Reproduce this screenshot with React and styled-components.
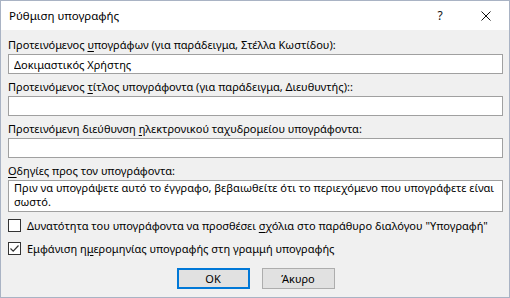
import React from 'react';
import styled, {createGlobalStyle} from 'styled-components';

const GlobalStyle = createGlobalStyle`
	html, body {
		margin: 0;
		padding: 0;
		background: #ffffff;
	}
	body {
		font-family: "Noto Sans", "Liberation Sans", sans-serif;
		font-size: 11px;
		color: #000;
	}
`;

const Window = styled.div`
	width: 510px;
	height: 298px;
	box-sizing: border-box;
	border: 1px solid #a9b3c4;
	background: #f0f0f0;
	display: flex;
	flex-direction: column;
	overflow: hidden;
`;

const TitleBar = styled.div`
	height: 29px;
	background: #ffffff;
	display: flex;
	align-items: center;
	padding-left: 8px;
	flex-shrink: 0;
`;

const Title = styled.div`
	flex: 1;
	font-size: 11.5px;
`;

const TitleButton = styled.div`
	width: 46px;
	height: 29px;
	display: flex;
	align-items: center;
	justify-content: center;
	font-size: 12px;
	color: #111;
`;

const Body = styled.div`
	flex: 1;
	display: flex;
	flex-direction: column;
	padding: 7px 6px 0 7px;
`;

const Field = styled.div`
	display: flex;
	flex-direction: column;
	margin-bottom: 5px;
	flex-shrink: 0;
`;

const Label = styled.div`
	height: 16px;
	line-height: 16px;
	margin-bottom: 1px;
	white-space: nowrap;
`;

const Key = styled.span`
	text-decoration: underline;
	text-underline-offset: 2px;
`;

const TextInput = styled.input`
	box-sizing: border-box;
	height: 20px;
	width: 100%;
	margin: 0;
	border: 1px solid #a0a0a0;
	background: #fff;
	font: inherit;
	padding: 0 5px;
	outline: none;
`;

const TextBox = styled.div`
	box-sizing: border-box;
	height: 32px;
	border: 1px solid #a0a0a0;
	background: #fff;
	padding: 0 5px;
	line-height: 14px;
	overflow: hidden;
`;

const CheckRow = styled.label`
	display: flex;
	align-items: center;
	height: 16px;
	gap: 6px;
	margin-top: ${p => p.$top}px;
	white-space: nowrap;
	flex-shrink: 0;
`;

const Box = styled.span`
	box-sizing: border-box;
	width: 13px;
	height: 13px;
	flex-shrink: 0;
	border: 1px solid #333;
	background: #fff;
	display: flex;
	align-items: center;
	justify-content: center;
`;

const Buttons = styled.div`
	display: flex;
	justify-content: center;
	gap: 12px;
	margin-top: 12px;
`;

const Button = styled.button`
	box-sizing: border-box;
	width: 73px;
	height: 21px;
	margin: 0;
	padding: 0;
	font: inherit;
	color: #000;
	background: #e1e1e1;
	border: ${p => p.$primary ? '2px solid #0078d7' : '1px solid #adadad'};
`;

const Checkbox = ({checked, top, children}) => (
	<CheckRow $top={top}>
		<Box>
			{checked &&
				<svg width="11" height="11" viewBox="0 0 11 11">
					<path d="M1.5 5.5 L4.2 8.2 L9.5 2.5" fill="none" stroke="#333" strokeWidth="1.2"/>
				</svg>
			}
		</Box>
		<span>{children}</span>
	</CheckRow>
);

export default function App() {
	return (
		<Window>
			<GlobalStyle/>
			<TitleBar>
				<Title>Ρύθμιση υπογραφής</Title>
				<TitleButton>?</TitleButton>
				<TitleButton>
					<svg width="10" height="10" viewBox="0 0 10 10">
						<path d="M0.5 0.5 L9.5 9.5 M9.5 0.5 L0.5 9.5" stroke="#111" strokeWidth="1"/>
					</svg>
				</TitleButton>
			</TitleBar>
			<Body>
				<Field>
					<Label>Προτεινόμενος <Key>υ</Key>πογράφων (για παράδειγμα, Στέλλα Κωστίδου):</Label>
					<TextInput defaultValue="Δοκιμαστικός Χρήστης"/>
				</Field>
				<Field>
					<Label>Προτεινόμενος <Key>τ</Key>ίτλος υπογράφοντα (για παράδειγμα, Διευθυντής)::</Label>
					<TextInput defaultValue=""/>
				</Field>
				<Field>
					<Label>Προτεινόμενη διεύθυνση <Key>η</Key>λεκτρονικού ταχυδρομείου υπογράφοντα:</Label>
					<TextInput defaultValue=""/>
				</Field>
				<Field>
					<Label><Key>Ο</Key>δηγίες προς τον υπογράφοντα:</Label>
					<TextBox>
						Πριν να υπογράψετε αυτό το έγγραφο, βεβαιωθείτε ότι το περιεχόμενο που υπογράφετε είναι<br/>σωστό.
					</TextBox>
				</Field>
				<Checkbox top={0}>Δυνατότητα του υπογράφοντα να προσθέσει <Key>σ</Key>χόλια στο παράθυρο διαλόγου "Υπογραφή"</Checkbox>
				<Checkbox top={7} checked>Εμφάνιση η<Key>μ</Key>ερομηνίας υπογραφής στη γραμμή υπογραφής</Checkbox>
				<Buttons>
					<Button $primary>OK</Button>
					<Button>Άκυρο</Button>
				</Buttons>
			</Body>
		</Window>
	);
}
